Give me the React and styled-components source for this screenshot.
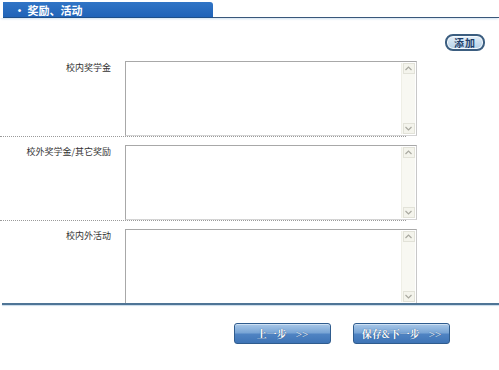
import React from "react";
import styled, { createGlobalStyle } from "styled-components";

const Global = createGlobalStyle`
  html, body { margin: 0; padding: 0; background: #fff; }
  body { font-family: "Noto Sans CJK SC", "Liberation Sans", sans-serif; }
`;

const Page = styled.div`
  width: 499px;
  height: 370px;
  background: #fff;
  overflow: hidden;
`;

const Header = styled.div`
  display: flex;
  align-items: flex-end;
  padding: 2px 0 0 3px;
  box-shadow: 0 2px 2px -1px #cfe0ef;
`;

const Tab = styled.div`
  width: 210px;
  height: 16px;
  background: linear-gradient(#3175c6, #2063b8);
  border-radius: 0 3px 0 0;
  color: #fff;
  font-size: 11px;
  font-weight: bold;
  line-height: 16px;
  padding-left: 11px;
  box-sizing: border-box;
  border-bottom: 1px solid #1d4f8a;
`;

const HeaderLine = styled.div`
  flex: 1;
  border-bottom: 1px solid #39577a;
`;

const Toolbar = styled.div`
  height: 35px;
  display: flex;
  justify-content: flex-end;
  align-items: flex-start;
  padding: 16px 14px 0 0;
  box-sizing: border-box;
`;

const AddButton = styled.button`
  width: 40px;
  height: 17px;
  padding: 0;
  border: 2px solid #3c5e80;
  border-radius: 8px;
  background: linear-gradient(#e6f0f8, #b4d0e8);
  color: #1f3f6a;
  font-family: inherit;
  font-size: 10px;
  font-weight: bold;
  line-height: 13px;
  letter-spacing: 1px;
  box-shadow: inset 0 0 0 1px #f4f9fd;
`;

const Row = styled.div`
  display: flex;
  align-items: flex-start;
  padding-top: 8px;
  position: relative;
  height: 75px;
  margin-bottom: 1px;
  &::after {
    content: "";
    position: absolute;
    left: ${(p) => (p.$last ? "2px" : "0")};
    bottom: -1px;
    width: ${(p) => (p.$last ? "497px" : "406px")};
    border-bottom: ${(p) => (p.$last ? "2px solid #4f7596" : "1px dotted #9a9a9a")};
    ${(p) => (p.$last ? "box-shadow: 0 1px 1px #c9dbea;" : "")}
  }
`;

const Label = styled.div`
  width: 111px;
  text-align: right;
  font-size: 9px;
  color: #333;
  line-height: 12px;
  padding-top: 1px;
  margin-right: 14px;
`;

const Field = styled.div`
  width: 292px;
  height: 75px;
  box-sizing: border-box;
  display: flex;
  border: 1px solid #a8a8a8;
  border-right-color: #c8c8c8;
  border-bottom-color: #d4d4d4;
  background: #fff;
`;

const Area = styled.textarea`
  flex: 1;
  border: none;
  resize: none;
  outline: none;
  padding: 2px;
  background: transparent;
  font-family: inherit;
  font-size: 11px;
  overflow: hidden;
`;

const Scroll = styled.div`
  width: 13px;
  margin: 1px 1px 1px 0;
  background: #f8f8f2;
  display: flex;
  flex-direction: column;
  justify-content: space-between;
  align-items: center;
  border-left: 1px solid #efefe6;
`;

const Arrow = styled.div`
  width: 12px;
  height: 11px;
  display: flex;
  align-items: center;
  justify-content: center;
  border: 1px solid #e2e2d8;
  box-sizing: border-box;
  background: #f4f4ec;
`;

const ArrowIcon = ({ up }) => (
  <svg width="7" height="5" viewBox="0 0 7 5">
    <path
      d={up ? "M0.5 4 L3.5 1 L6.5 4" : "M0.5 1 L3.5 4 L6.5 1"}
      fill="none"
      stroke="#a9a9a0"
      strokeWidth="1.2"
    />
  </svg>
);

const Footer = styled.div`
  display: flex;
  gap: 22px;
  padding: 18px 0 0 234px;
`;

const NavButton = styled.button`
  width: 97px;
  height: 21px;
  padding: 0;
  border: 1px solid #2f5c8e;
  border-radius: 3px;
  background: linear-gradient(#a9c8e8 0%, #7aa6d6 45%, #4f83c2 55%, #3e74b6 100%);
  color: #fff;
  font-family: "Noto Serif CJK SC", "Noto Sans CJK SC", serif;
  font-size: 10px;
  font-weight: bold;
  line-height: 19px;
  text-shadow: 0 0 1px #1d4576;
  box-shadow: inset 0 1px 0 #cfe1f3;
`;

const Chev = styled.span`
  margin-left: 9px;
  font-family: "Liberation Serif", serif;
  font-size: 11px;
  font-weight: normal;
  letter-spacing: 0px;
`;

const fields = ["校内奖学金", "校外奖学金/其它奖励", "校内外活动"];

export default function App() {
  return (
    <Page>
      <Global />
      <Header>
        <Tab>• 奖励、活动</Tab>
        <HeaderLine />
      </Header>
      <Toolbar>
        <AddButton>添加</AddButton>
      </Toolbar>
      {fields.map((f, i) => (
        <Row key={f} $last={i === fields.length - 1}>
          <Label>{f}</Label>
          <Field>
            <Area />
            <Scroll>
              <Arrow>
                <ArrowIcon up />
              </Arrow>
              <Arrow>
                <ArrowIcon />
              </Arrow>
            </Scroll>
          </Field>
        </Row>
      ))}
      <Footer>
        <NavButton>
          上一步<Chev>&gt;&gt;</Chev>
        </NavButton>
        <NavButton>
          保存&amp;下一步<Chev>&gt;&gt;</Chev>
        </NavButton>
      </Footer>
    </Page>
  );
}
